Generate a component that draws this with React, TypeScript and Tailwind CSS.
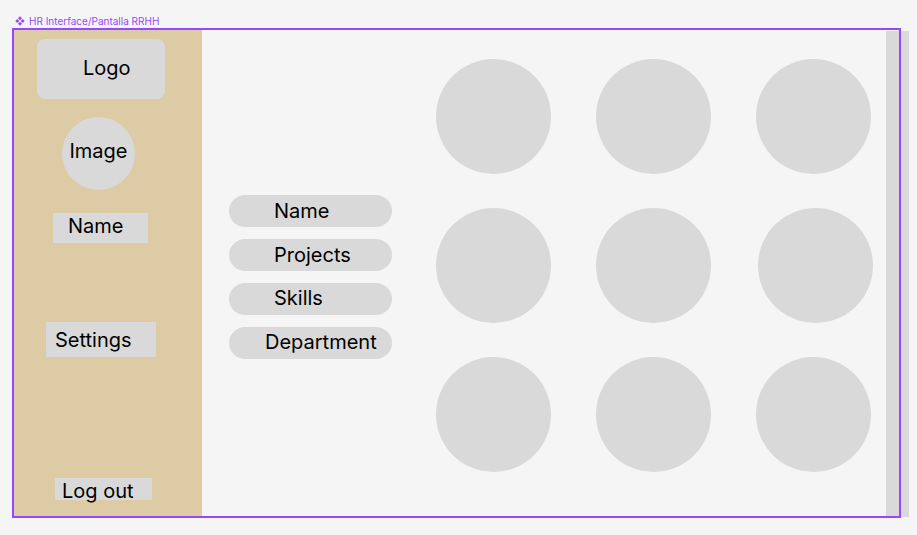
const pills = [
  { label: 'Name', indent: 'pl-[45px]' },
  { label: 'Projects', indent: 'pl-[45px]' },
  { label: 'Skills', indent: 'pl-[45px] pb-[2px]' },
  { label: 'Department', indent: 'pl-[36px] pb-[3px]' },
];

function Circle({ shift }: { shift?: boolean }) {
  return (
    <div className={`w-[115px] h-[115px] rounded-full bg-[#d9d9d9] ${shift ? 'ml-[2px]' : ''}`} />
  );
}

export default function App() {
  return (
    <div
      className="w-[917px] h-[535px] bg-[#f5f5f5] text-black overflow-hidden pl-[12px] pt-[14px]"
      style={{ fontFamily: 'Inter, "Noto Sans", sans-serif' }}
    >
      {/* frame label */}
      <div className="flex items-center gap-[4px] h-[14px] pl-[3px] text-[10px] leading-none text-[#9747ff]">
        <svg width="10" height="10" viewBox="0 0 10 10" fill="#9747ff">
          <path d="M5 0.3 L7 2.3 L5 4.3 L3 2.3 Z" />
          <path d="M5 5.7 L7 7.7 L5 9.7 L3 7.7 Z" />
          <path d="M0.3 5 L2.3 3 L4.3 5 L2.3 7 Z" />
          <path d="M5.7 5 L7.7 3 L9.7 5 L7.7 7 Z" />
        </svg>
        <span>HR Interface/Pantalla RRHH</span>
      </div>

      {/* frame */}
      <div className="relative w-[889px] h-[490px]">
        <div className="w-full h-full p-[2px] flex">
          {/* sidebar */}
          <div className="w-[188px] h-full bg-[#dccba5] flex flex-col items-start text-[20px] leading-none">
            <div className="ml-[23px] mt-[9px] w-[128px] h-[60px] rounded-[8px] bg-[#d9d9d9] flex items-center pl-[46px] pb-[2px]">
              Logo
            </div>
            <div className="ml-[48px] mt-[18px] w-[73px] h-[73px] rounded-full bg-[#d9d9d9] flex items-center justify-center pb-[6px]">
              Image
            </div>
            <div className="ml-[39px] mt-[23px] w-[95px] h-[30px] bg-[#d9d9d9] flex items-center pl-[15px] pb-[4px]">
              Name
            </div>
            <div className="ml-[32px] mt-[79px] w-[110px] h-[35px] bg-[#d9d9d9] flex items-center pl-[9px]">
              Settings
            </div>
            <div className="ml-[41px] mt-[121px] w-[97px] h-[22px] bg-[#d9d9d9] flex items-start pl-[7px] pt-[3px]">
              Log out
            </div>
          </div>

          {/* main */}
          <div className="flex-1 flex">
            <div className="ml-[27px] mt-[165px] flex flex-col gap-[12px]">
              {pills.map((p) => (
                <div
                  key={p.label}
                  className={`w-[163px] h-[32px] rounded-full bg-[#d9d9d9] flex items-center text-[20px] leading-none ${p.indent}`}
                >
                  {p.label}
                </div>
              ))}
            </div>
            <div className="ml-[44px] mt-[29px] grid grid-cols-[115px_115px_117px] gap-x-[45px] gap-y-[34px] content-start">
              <Circle />
              <Circle />
              <Circle />
              <Circle />
              <Circle />
              <Circle shift />
              <Circle />
              <Circle />
              <Circle />
            </div>
          </div>
        </div>

        {/* scroll strip sticking out past the frame edge */}
        <div className="absolute left-[874px] top-[3px] w-[23px] h-[486px] bg-[#d9d9d9]" />
        {/* selection outline */}
        <div className="absolute inset-0 border-2 border-[#9747ff] pointer-events-none" />
      </div>
    </div>
  );
}
